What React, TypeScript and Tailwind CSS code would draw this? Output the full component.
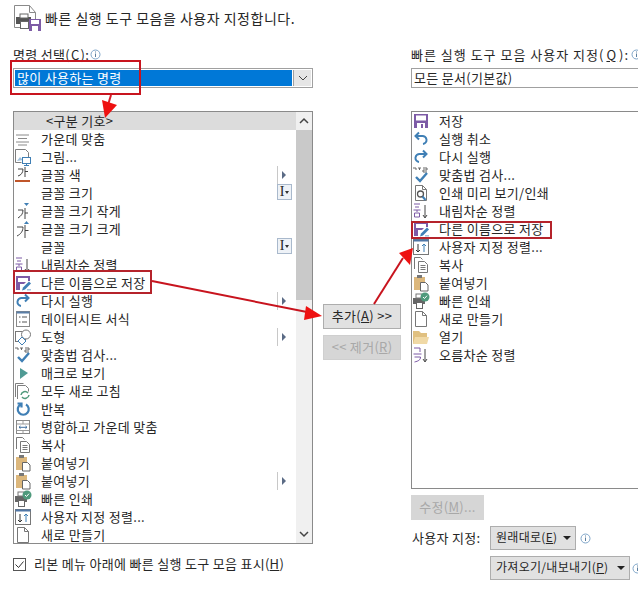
import type { ReactNode } from 'react';

type IconKind =
  | 'center' | 'picture' | 'fontColor' | 'shrink' | 'grow' | 'sortDesc' | 'saveAs' | 'redo' | 'undo'
  | 'datasheet' | 'shape' | 'spell' | 'macro' | 'refresh' | 'repeat' | 'merge' | 'copy' | 'paste'
  | 'quickPrint' | 'customSort' | 'newDoc' | 'save' | 'preview' | 'open' | 'sortAsc';

interface Row {
  label: string;
  icon?: IconKind;
  extra?: 'arrow' | 'combo';
}

const LEFT_ROWS: Row[] = [
  { label: '가운데 맞춤', icon: 'center' },
  { label: '그림...', icon: 'picture' },
  { label: '글꼴 색', icon: 'fontColor', extra: 'arrow' },
  { label: '글꼴 크기', extra: 'combo' },
  { label: '글꼴 크기 작게', icon: 'shrink' },
  { label: '글꼴 크기 크게', icon: 'grow' },
  { label: '글꼴', extra: 'combo' },
  { label: '내림차순 정렬', icon: 'sortDesc' },
  { label: '다른 이름으로 저장', icon: 'saveAs' },
  { label: '다시 실행', icon: 'redo', extra: 'arrow' },
  { label: '데이터시트 서식', icon: 'datasheet' },
  { label: '도형', icon: 'shape', extra: 'arrow' },
  { label: '맞춤법 검사...', icon: 'spell' },
  { label: '매크로 보기', icon: 'macro' },
  { label: '모두 새로 고침', icon: 'refresh' },
  { label: '반복', icon: 'repeat' },
  { label: '병합하고 가운데 맞춤', icon: 'merge' },
  { label: '복사', icon: 'copy' },
  { label: '붙여넣기', icon: 'paste' },
  { label: '붙여넣기', icon: 'paste', extra: 'arrow' },
  { label: '빠른 인쇄', icon: 'quickPrint' },
  { label: '사용자 지정 정렬...', icon: 'customSort' },
  { label: '새로 만들기', icon: 'newDoc' },
];

const RIGHT_ROWS: Row[] = [
  { label: '저장', icon: 'save' },
  { label: '실행 취소', icon: 'undo' },
  { label: '다시 실행', icon: 'redo' },
  { label: '맞춤법 검사...', icon: 'spell' },
  { label: '인쇄 미리 보기/인쇄', icon: 'preview' },
  { label: '내림차순 정렬', icon: 'sortDesc' },
  { label: '다른 이름으로 저장', icon: 'saveAs' },
  { label: '사용자 지정 정렬...', icon: 'customSort' },
  { label: '복사', icon: 'copy' },
  { label: '붙여넣기', icon: 'paste' },
  { label: '빠른 인쇄', icon: 'quickPrint' },
  { label: '새로 만들기', icon: 'newDoc' },
  { label: '열기', icon: 'open' },
  { label: '오름차순 정렬', icon: 'sortAsc' },
];

const DOC = '#7f7f7f';
const BLUE = '#3f7fb5';
const PURPLE = '#7d5ba6';

function IconBody({ kind }: { kind: IconKind }) {
  switch (kind) {
    case 'center':
      return <path d="M2 5h13M4 8.500h9M2 12h13M4 15h9" stroke="#8a8a8a" fill="none" />;
    case 'picture':
      return (
        <>
          <path d="M1.500 1.500h10l3 3v5M1.500 1.500v13h6" stroke={DOC} fill="none" />
          <path d="M3 13l3-4 3 3z" fill="#9fc0dc" />
          <rect x="8.500" y="9.500" width="8" height="6" fill="#fff" stroke={BLUE} />
          <path d="M12.500 15.500v2M10 17.500h5" stroke={BLUE} />
        </>
      );
    case 'fontColor':
      return (
        <>
          <path d="M4 3h5c0 4-2 6-5 7M11 1v10M11 5.500h3" stroke="#444" fill="none" />
          <rect x="1" y="14" width="15" height="2" fill="#c0562a" />
        </>
      );
    case 'shrink':
      return (
        <>
          <path d="M4 8h5c0 4-2 6-5 8M11 6v11M11 11h3" stroke="#444" fill="none" />
          <path d="M10 1h5l-2.500 3z" fill={BLUE} />
        </>
      );
    case 'grow':
      return (
        <>
          <path d="M3 7h6c0 4-2 7-6 9M11 5v13M11 10.500h3.500" stroke="#444" fill="none" />
          <path d="M10 4h5l-2.500-3z" fill={BLUE} />
        </>
      );
    case 'sortDesc':
      return (
        <>
          <path d="M2 2h6M3 5h4M1.500 8h7M5 8v2M2.500 11h5v4h-5z" stroke={PURPLE} fill="none" />
          <path d="M13 3v12M11 13l2 3 2-3" stroke="#444" fill="none" />
        </>
      );
    case 'sortAsc':
      return (
        <>
          <path d="M2 2h6v4M1.500 8h8M2.500 11h6c0 3-2 4-6 5" stroke={PURPLE} fill="none" />
          <path d="M13 3v12M11 13l2 3 2-3" stroke="#444" fill="none" />
        </>
      );
    case 'save':
      return (
        <>
          <rect x="2" y="2" width="14" height="14" fill={PURPLE} />
          <rect x="4" y="3.500" width="10" height="5" fill="#fff" />
          <rect x="5" y="11" width="8" height="5" fill="#fff" />
          <rect x="9" y="12" width="2" height="4" fill={PURPLE} />
        </>
      );
    case 'saveAs':
      return (
        <>
          <path d="M2 2h14v5h-2V4H4v4h8l-2 2H6v6H2z" fill={PURPLE} />
          <path d="M8 16.500l1-3 6-6 2 2-6 6z" fill={BLUE} />
          <path d="M13 15h4v1.500h-4z" fill="#a3c4de" />
        </>
      );
    case 'redo':
      return <path d="M14 6H8a4 4 0 0 0-1 8M11 2.500L14.500 6 11 9.500" stroke={BLUE} fill="none" strokeWidth="2" />;
    case 'undo':
      return <path d="M4 6h6a4 4 0 0 1 1 8M7 2.500L3.500 6 7 9.500" stroke={BLUE} fill="none" strokeWidth="2" />;
    case 'datasheet':
      return (
        <>
          <rect x="2.500" y="1.500" width="13" height="15" fill="#fff" stroke="#888" />
          <rect x="2.500" y="1.500" width="13" height="2" fill="#5a7fa8" />
          <path d="M5 7h1.500M8 7h5M5 12h1.500M8 12h5" stroke="#555" />
        </>
      );
    case 'shape':
      return (
        <>
          <rect x="1.500" y="3.500" width="10" height="10" fill="none" stroke="#777" />
          <circle cx="12" cy="6.500" r="4.500" fill="#fff" stroke="#777" />
          <path d="M8 9l4 4-4 4-4-4z" fill="#fff" stroke={BLUE} />
        </>
      );
    case 'spell':
      return (
        <>
          <path d="M1 2h3v2M6 2h3M7.500 2v2M11 2h4v2h-4v2h4" stroke="#666" fill="none" />
          <path d="M4 11l4 4 7-8" stroke={BLUE} fill="none" strokeWidth="2.400" />
        </>
      );
    case 'macro':
      return <path d="M6 4l8 5-8 6z" fill="#4f9a94" />;
    case 'refresh':
      return (
        <>
          <path d="M1.500 15V1.500h8M3.500 17V3.500h8l3 3v3" stroke={DOC} fill="none" />
          <path d="M7 13a4 4 0 0 1 7-2M15 13a4 4 0 0 1-7 2" stroke="#4f9a7c" fill="none" strokeWidth="1.500" />
        </>
      );
    case 'repeat':
      return <path d="M6.500 4.500a5.500 5.500 0 1 0 5.500 0M3.500 3.500h4v4" stroke={BLUE} fill="none" strokeWidth="2.200" />;
    case 'merge':
      return (
        <>
          <rect x="2.500" y="2.500" width="13" height="13" fill="#fff" stroke="#888" />
          <path d="M2.500 6h13M2.500 12.500h13M9 2.500V6M9 12.500v3" stroke="#999" />
          <path d="M5 9.300h8M6.500 8l-1.500 1.300 1.500 1.300M11.500 8l1.500 1.300-1.500 1.300" stroke="#3f6f9f" fill="none" />
        </>
      );
    case 'copy':
      return (
        <>
          <path d="M2.500 13V1.500h6l2 2" stroke="#777" fill="none" />
          <path d="M6.500 5.500h6l3 3v8h-9zM8.500 9.500h5M8.500 11.500h5M8.500 13.500h5" stroke="#777" fill="#fff" />
        </>
      );
    case 'paste':
      return (
        <>
          <rect x="2" y="3" width="11" height="13" fill="#dcb77c" />
          <rect x="5" y="1" width="5" height="3" fill="#777" />
          <path d="M8.500 8.500h5l2.500 2.500v6h-7.500z" fill="#fff" stroke="#666" />
        </>
      );
    case 'quickPrint':
      return (
        <>
          <rect x="1" y="6" width="12" height="6" fill="#666" />
          <rect x="4" y="2" width="6" height="4" fill="#fff" stroke="#777" />
          <rect x="4.500" y="10.500" width="6" height="6" fill="#fff" stroke="#666" />
          <circle cx="13" cy="5" r="4.500" fill="#4f9a7c" />
          <path d="M11 5l1.500 1.500L15 3.700" stroke="#fff" fill="none" />
        </>
      );
    case 'customSort':
      return (
        <>
          <rect x="1.500" y="1.500" width="15" height="15" fill="#fff" stroke="#777" />
          <rect x="1.500" y="1.500" width="15" height="2" fill="#4f76a6" />
          <path d="M6 6v8M4 12l2 2 2-2" stroke="#333" fill="none" />
          <path d="M12 14V6M10 8l2-2 2 2" stroke={BLUE} fill="none" />
        </>
      );
    case 'newDoc':
      return <path d="M3.500 1.500h7l4 4v11h-11zM10.500 1.500v4h4" stroke="#777" fill="#fff" />;
    case 'preview':
      return (
        <>
          <path d="M3.500 16.500v-15h7l4 4v11zM10.500 1.500v4h4" stroke="#777" fill="#fff" />
          <circle cx="8.500" cy="10" r="3" fill="#fff" stroke="#555" strokeWidth="1.300" />
          <path d="M10.500 12.500l3 3.500" stroke={BLUE} strokeWidth="2" />
        </>
      );
    case 'open':
      return (
        <>
          <path d="M1 3h6l2 2h6v11H1z" fill="#e0c080" />
          <path d="M1 16l2-7h14l-2 7z" fill="#f0d9a6" />
        </>
      );
  }
}

function ListIcon({ kind }: { kind: IconKind }) {
  return (
    <svg width="18" height="18" viewBox="0 0 18 18" className="shrink-0">
      <IconBody kind={kind} />
    </svg>
  );
}

function InfoDot() {
  return (
    <svg width="11" height="11" viewBox="0 0 11 11" className="shrink-0">
      <circle cx="5.500" cy="5.500" r="4.500" fill="none" stroke="#7fa6c9" />
      <path d="M5.500 4.500v3.500M5.500 2.500v1" stroke="#5d7f9f" />
    </svg>
  );
}

function ListRow({ row }: { row: Row }) {
  return (
    <div className="relative flex h-[18px] items-center">
      <span className="flex w-[18px] shrink-0 justify-center">{row.icon ? <ListIcon kind={row.icon} /> : null}</span>
      <span className="ml-[9px] whitespace-nowrap pb-[2px]">{row.label}</span>
      {row.extra === 'arrow' ? (
        <span className="absolute right-[5px] top-0 flex h-[18px] w-[14px] items-center border-l border-[#c8c8c8] pl-[4px]">
          <span className="h-0 w-0 border-y-[4px] border-l-[4px] border-y-transparent border-l-[#5b6b85]" />
        </span>
      ) : null}
      {row.extra === 'combo' ? (
        <span className="absolute right-[4px] top-0 flex h-[16px] w-[15px] items-center justify-center gap-[1px] border border-[#a9b9cc] bg-[#eef2f7] text-[14px] leading-none tracking-normal">
          <span className="font-['Liberation_Serif',serif]">I</span>
          <span className="h-0 w-0 border-x-[2px] border-t-[3px] border-x-transparent border-t-[#333]" />
        </span>
      ) : null}
    </div>
  );
}

function MenuButton({ children, className }: { children: ReactNode; className: string }) {
  return (
    <div className={`flex h-[24px] items-center border border-[#adadad] bg-[#e1e1e1] pl-[5px] text-[12px] ${className}`}>
      {children}
      <span className="ml-auto mr-[4px] h-0 w-0 border-x-[4px] border-t-[4px] border-x-transparent border-t-[#222]" />
    </div>
  );
}

function Annotations() {
  return (
    <>
      <div className="absolute left-[10px] top-[60px] h-[35px] w-[131px] border-2 border-[#c8141e]" />
      <div className="absolute left-[13px] top-[270px] h-[24px] w-[139px] border-2 border-[#b5232b]" />
      <div className="absolute left-[411px] top-[221px] h-[18px] w-[141px] border-2 border-[#b5232b]" />
      <svg width="638" height="590" viewBox="0 0 638 590" className="pointer-events-none absolute left-0 top-0">
        <path d="M111 95l-3 10" stroke="#d81e28" strokeWidth="2" />
        <path d="M102 100l15 5-12 13z" fill="#ee1111" />
        <path d="M152 281l160 32" stroke="#c8141e" strokeWidth="2" />
        <path d="M306 306l16 10-18 4z" fill="#ee1111" />
        <path d="M374 304l29-46" stroke="#c8141e" strokeWidth="2" />
        <path d="M399 253l14-5-3 17z" fill="#ee1111" />
      </svg>
    </>
  );
}

export default function App() {
  return (
    <div className="relative h-[590px] w-[638px] overflow-hidden bg-white font-['Noto_Sans_CJK_KR','Noto_Sans',sans-serif] text-[13px] leading-none tracking-[0.3px] text-[#262626]">
      <div className="flex h-[46px] items-center gap-[4px] pb-[18px] pl-[13px] pt-[8px]">
        <svg width="28" height="28" viewBox="0 0 28 28" className="shrink-0">
          <path d="M1.500 1.500h15l6 7v9M1.500 1.500v22h10" stroke="#8a8a8a" fill="#fff" />
          <path d="M16.500 1.500v7h6" stroke="#8a8a8a" fill="none" />
          <rect x="3" y="13" width="15" height="7" fill="#555" />
          <rect x="7" y="10" width="8" height="4" fill="#fff" stroke="#666" />
          <rect x="7.500" y="17.500" width="8" height="7" fill="#fff" stroke="#666" />
          <rect x="16" y="15" width="12" height="12" fill={PURPLE} />
          <rect x="18" y="16" width="8" height="4" fill="#fff" />
          <rect x="19" y="22" width="6" height="5" fill="#fff" />
        </svg>
        <span className="whitespace-nowrap text-[14px] tracking-[0.5px]">빠른 실행 도구 모음을 사용자 지정합니다.</span>
      </div>

      <div className="flex pl-[13px]">
        <div className="w-[300px] shrink-0">
          <div className="flex h-[22px] items-center gap-[1px] whitespace-nowrap pb-[6px]">
            명령 선택(<u>C</u>):
            <InfoDot />
          </div>
          <div className="flex h-[20px] border border-[#a0a0a0] p-[1px]">
            <div className="flex flex-1 items-center bg-[#0078d7] pb-[2px] pl-[2px] text-white">많이 사용하는 명령</div>
            <div className="ml-[1px] flex w-[18px] items-center justify-center border-l border-[#a0a0a0] bg-[#e6e6e6]">
              <svg width="10" height="6" viewBox="0 0 10 6">
                <path d="M1 1l4 4 4-4" stroke="#444" fill="none" />
              </svg>
            </div>
          </div>
          <div className="mt-[23px] flex h-[433px] border border-[#8a8a8a]">
            <div className="min-w-0 flex-1 overflow-hidden">
              <div className="flex h-[18px] items-center bg-[#dcdcdc] pb-[2px] pl-[32px]">{'<구분 기호>'}</div>
              {LEFT_ROWS.map((row, i) => (
                <ListRow key={i} row={row} />
              ))}
            </div>
            <div className="flex w-[16px] shrink-0 flex-col items-center bg-[#f0f0f0]">
              <svg width="16" height="18" viewBox="0 0 16 18" className="shrink-0">
                <path d="M4 11l4-4 4 4" stroke="#444" strokeWidth="1.500" fill="none" />
              </svg>
              <div className="h-[170px] w-full bg-[#c9c9c9]" />
              <div className="flex-1" />
              <svg width="16" height="18" viewBox="0 0 16 18" className="shrink-0">
                <path d="M4 7l4 4 4-4" stroke="#444" strokeWidth="1.500" fill="none" />
              </svg>
            </div>
          </div>
          <div className="mt-[13px] flex items-center gap-[8px] whitespace-nowrap">
            <span className="flex h-[13px] w-[13px] items-center justify-center border border-[#555]">
              <svg width="11" height="11" viewBox="0 0 11 11">
                <path d="M1.500 5.500l3 3 5-6" stroke="#333" fill="none" />
              </svg>
            </span>
            <span className="pb-[2px]">
              리본 메뉴 아래에 빠른 실행 도구 모음 표시(<u>H</u>)
            </span>
          </div>
        </div>

        <div className="flex w-[98px] shrink-0 flex-col gap-[6px] pl-[10px] pt-[258px]">
          <div className="flex h-[25px] w-[78px] items-center justify-center whitespace-nowrap border border-[#adadad] bg-[#e1e1e1] pb-[2px]">
            추가(<u>A</u>)&nbsp;&gt;&gt;
          </div>
          <div className="flex h-[25px] w-[78px] items-center justify-center whitespace-nowrap border border-[#cfcfcf] bg-[#d6d6d6] pb-[2px] text-[#a8a8a8]">
            &lt;&lt;&nbsp;제거(<u>R</u>)
          </div>
        </div>

        <div className="w-[260px] shrink-0">
          <div className="flex h-[22px] items-center gap-[2px] whitespace-nowrap pb-[6px] tracking-[1px]">
            빠른 실행 도구 모음 사용자 지정(<u>Q</u>):
            <InfoDot />
          </div>
          <div className="flex h-[20px] items-center border border-[#a0a0a0] pb-[2px] pl-[2px]">모든 문서(기본값)</div>
          <div className="mt-[23px] h-[378px] border border-[#8a8a8a]">
            {RIGHT_ROWS.map((row, i) => (
              <ListRow key={i} row={row} />
            ))}
          </div>
          <div className="mt-[6px] flex h-[25px] w-[73px] items-center justify-center bg-[#d6d6d6] pb-[2px] text-[#a8a8a8]">
            수정(<u>M</u>)...
          </div>
          <div className="mt-[6px] flex items-center">
            <span className="w-[79px] shrink-0 pb-[2px] pl-[1px]">사용자 지정:</span>
            <MenuButton className="w-[86px]">
              <span className="whitespace-nowrap pb-[2px]">
                원래대로(<u>E</u>)
              </span>
            </MenuButton>
            <span className="ml-[4px]">
              <InfoDot />
            </span>
          </div>
          <div className="mt-[6px] flex items-center pl-[79px]">
            <MenuButton className="w-[140px] shrink-0">
              <span className="whitespace-nowrap pb-[2px]">
                가져오기/내보내기(<u>P</u>)
              </span>
            </MenuButton>
            <span className="ml-[2px]">
              <InfoDot />
            </span>
          </div>
        </div>
      </div>

      <Annotations />
    </div>
  );
}
